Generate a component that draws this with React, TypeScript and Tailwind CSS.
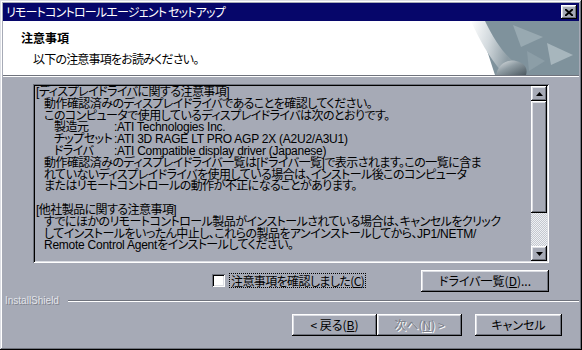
import React from "react";

const raised =
  "shadow-[inset_-1px_-1px_#000,inset_1px_1px_#fff,inset_-2px_-2px_#6f737d,inset_2px_2px_#dcdee4]";
const sunken =
  "shadow-[inset_1px_1px_#6f737d,inset_-1px_-1px_#fff,inset_2px_2px_#000,inset_-2px_-2px_#dcdee4]";

const HeaderArt = () => (
  <svg width="108" height="54" viewBox="0 0 108 54" className="block">
    <defs>
      <linearGradient id="curl" x1="0" y1="0" x2="1" y2="0.3">
        <stop offset="0" stopColor="#ffffff" />
        <stop offset="0.5" stopColor="#d2d9dd" />
        <stop offset="1" stopColor="#8d9ca4" />
      </linearGradient>
      <linearGradient id="roll" x1="0" y1="0" x2="1" y2="1">
        <stop offset="0" stopColor="#e4e8ea" />
        <stop offset="0.45" stopColor="#8f9ca3" />
        <stop offset="1" stopColor="#4c5961" />
      </linearGradient>
    </defs>
    <rect width="108" height="54" fill="#fff" />
    <path d="M6 0 H108 V54 H24 C18 36 12 16 6 0 Z" fill="#7f929c" />
    <path d="M42 4 L72 16 L50 26 Z" fill="#98a9b1" />
    <path d="M76 22 L102 34 L80 44 Z" fill="#a7b6bd" />
    <path d="M56 30 L74 40 L58 50 Z" fill="#8c9ea7" />
    <path d="M0 0 H14 C22 16 30 30 42 40 L30 50 C18 36 8 18 0 0 Z" fill="url(#curl)" />
    <path d="M25 54 C27 44 35 38 45 40 C54 42 57 48 55 54 Z" fill="url(#roll)" />
  </svg>
);

const Btn = ({
  children,
  w,
  disabled,
}: {
  children: React.ReactNode;
  w: string;
  disabled?: boolean;
}) => (
  <div
    className={`${w} h-[22px] flex items-center justify-center bg-[#a6aab6] ${raised} ${
      disabled ? "text-[#7a7e88] [text-shadow:1px_1px_0_#ffffff]" : "text-black"
    }`}
  >
    {children}
  </div>
);

// latin runs keep a looser spacing than the kana around them
const L = ({ children }: { children: React.ReactNode }) => (
  <span className="tracking-[-0.25px]">{children}</span>
);

const lines: { t: React.ReactNode; pl: string }[] = [
  { t: "[ディスプレイドライバに関する注意事項]", pl: "pl-0" },
  { t: "動作確認済みのディスプレイドライバであることを確認してください。", pl: "pl-[8px]" },
  { t: "このコンピュータで使用しているディスプレイドライバは次のとおりです。", pl: "pl-[8px]" },
  {
    t: (
      <>
        <span className="inline-block w-[60px]">製造元</span>
        <L>:ATI Technologies Inc.</L>
      </>
    ),
    pl: "pl-[18px]",
  },
  {
    t: (
      <>
        <span className="inline-block w-[60px]">チップセット</span>
        <L>:ATI 3D RAGE LT PRO AGP 2X (A2U2/A3U1)</L>
      </>
    ),
    pl: "pl-[18px]",
  },
  {
    t: (
      <>
        <span className="inline-block w-[60px]">ドライバ</span>
        <L>:ATI Compatible display driver (Japanese)</L>
      </>
    ),
    pl: "pl-[18px]",
  },
  {
    t: "動作確認済みのディスプレイドライバ一覧は[ドライバ一覧]で表示されます。この一覧に含ま",
    pl: "pl-[8px]",
  },
  {
    t: "れていないディスプレイドライバを使用している場合は、インストール後このコンピュータ",
    pl: "pl-[8px]",
  },
  { t: "またはリモートコントロールの動作が不正になることがあります。", pl: "pl-[8px]" },
  { t: "\u00a0", pl: "pl-0" },
  { t: "[他社製品に関する注意事項]", pl: "pl-0" },
  {
    t: "すでにほかのリモートコントロール製品がインストールされている場合は、キャンセルをクリック",
    pl: "pl-[8px]",
  },
  {
    t: (
      <>
        してインストールをいったん中止し、これらの製品をアンインストールしてから、<L>JP1/NETM/</L>
      </>
    ),
    pl: "pl-[8px]",
  },
  {
    t: (
      <>
        <L>Remote Control Agent</L>をインストールしてください。
      </>
    ),
    pl: "pl-[8px]",
  },
];

export default function App() {
  return (
    <div className="w-[582px] h-[350px] overflow-hidden bg-[#a6aab6] font-['Noto_Sans_CJK_JP',sans-serif] text-[12px] leading-[12px] [font-feature-settings:'palt'] text-black shadow-[inset_-1px_-1px_#000,inset_1px_1px_#dcdee4,inset_-2px_-2px_#6f737d,inset_2px_2px_#fff] p-[3px] flex flex-col">
      {/* title bar */}
      <div className="h-[18px] bg-[#06066a] flex items-center justify-between pl-[3px] pr-[2px]">
        <span className="text-white text-[12px] tracking-[-0.8px]">
          リモートコントロールエージェント セットアップ
        </span>
        <div className={`w-[16px] h-[14px] bg-[#a6aab6] ${raised} flex items-center justify-center`}>
          <svg width="8" height="7" viewBox="0 0 8 7">
            <path d="M0 0 L8 7 M8 0 L0 7" stroke="#000" strokeWidth="2" />
          </svg>
        </div>
      </div>

      {/* header */}
      <div className="h-[54px] bg-white flex justify-between">
        <div className="flex flex-col pl-[18px] pt-[11px]">
          <span className="font-bold">注意事項</span>
          <span className="pl-[12px] mt-[9px] tracking-[-0.8px]">以下の注意事項をお読みください。</span>
        </div>
        <HeaderArt />
      </div>
      <div className="h-[1px] bg-[#6f737d]" />
      <div className="h-[1px] bg-white" />

      {/* body */}
      <div className="flex flex-col pl-[30px] pr-[30px] pt-[7px]">
        <div className={`h-[179px] flex ${sunken} p-[2px]`}>
          <div className="flex-1 overflow-hidden pl-[1px] pt-[1px] leading-[11.8px] font-['Liberation_Sans','Noto_Sans_CJK_JP',sans-serif] tracking-[-0.55px]">
            {lines.map((l, i) => (
              <div key={i} className={`whitespace-nowrap ${l.pl}`}>
                {l.t}
              </div>
            ))}
          </div>
          <div className="w-[16px] flex flex-col">
            <div className={`h-[15px] flex items-center justify-center ${raised}`}>
              <svg width="7" height="4" viewBox="0 0 7 4">
                <path d="M3.5 0 L7 4 L0 4 Z" fill="#000" />
              </svg>
            </div>
            <div className={`h-[112px] ${raised}`} />
            <div className="flex-1 bg-[repeating-conic-gradient(#c4c8d0_0_25%,#eef0f3_0_50%)] bg-[length:2px_2px]" />
            <div className={`h-[15px] flex items-center justify-center ${raised}`}>
              <svg width="7" height="4" viewBox="0 0 7 4">
                <path d="M0 0 L7 0 L3.5 4 Z" fill="#000" />
              </svg>
            </div>
          </div>
        </div>

        {/* checkbox row */}
        <div className="flex items-center mt-[7px] h-[21px]">
          <div className="w-[179px]" />
          <div className={`w-[13px] h-[13px] bg-white ${sunken}`} />
          <div className="ml-[4px] border border-dotted border-black px-[1px] h-[15px] flex items-center tracking-[-0.6px]">
            注意事項を確認しました(<span className="underline">C</span>)
          </div>
          <div className="flex-1" />
          <Btn w="w-[128px]">
            ドライバ一覧(<span className="underline">D</span>)...
          </Btn>
        </div>
      </div>

      {/* InstallShield separator */}
      <div className="flex items-center mt-[4px] h-[12px]">
        <span className="pl-[2px] text-[10px] leading-[10px] text-[#e2e4ea] font-['Liberation_Sans',sans-serif] [text-shadow:1px_1px_0_#7d818b]">
          InstallShield
        </span>
        <div className="flex-1 ml-[9px] flex flex-col">
          <div className="h-[1px] bg-[#6f737d]" />
          <div className="h-[1px] bg-white" />
        </div>
      </div>

      {/* buttons */}
      <div className="flex justify-end mt-[7px] pr-[17px]">
        <Btn w="w-[85px]">
          &lt; 戻る(<span className="underline">B</span>)
        </Btn>
        <Btn w="w-[85px]" disabled>
          次へ(<span className="underline">N</span>) &gt;
        </Btn>
        <div className="w-[13px]" />
        <Btn w="w-[87px]">キャンセル</Btn>
      </div>
    </div>
  );
}
